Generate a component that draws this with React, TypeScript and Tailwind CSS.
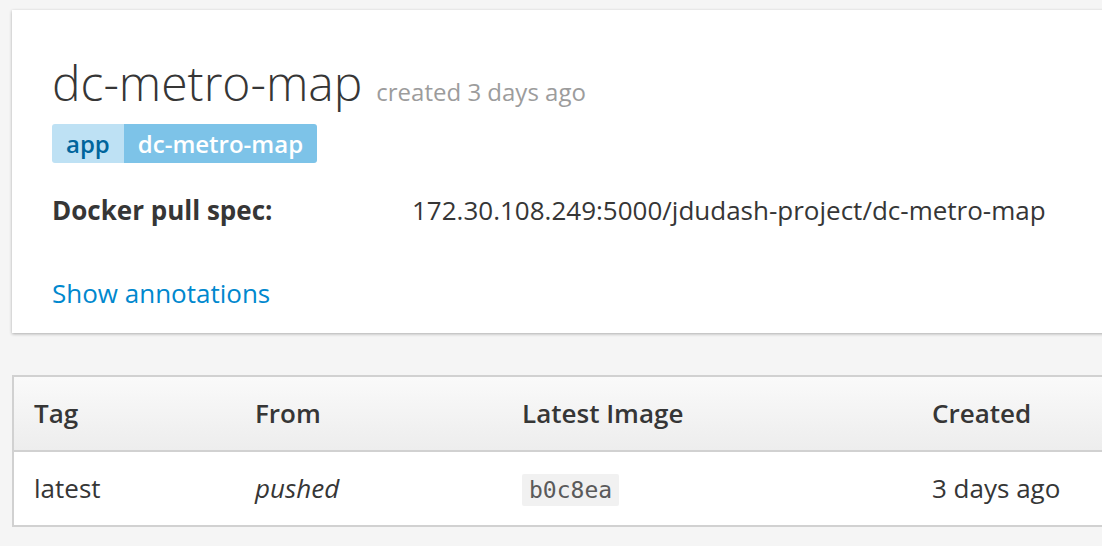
export default function App() {
  return (
    <div className="min-h-screen w-[1102px] h-[546px] overflow-hidden bg-[#f5f5f5] font-['Open_Sans',sans-serif] text-[#363636]">
      <div className="ml-[12px] mt-[10px] w-[1200px] bg-white px-[40px] pt-[45px] pb-[22px] shadow-[0_1px_3px_rgba(0,0,0,0.3)]">
        <div className="flex items-baseline gap-[14px]">
          <h1 className="text-[48px] font-light leading-[56px] text-[#363636]">dc-metro-map</h1>
          <span className="text-[24px] text-[#9c9c9c]">created 3 days ago</span>
        </div>
        <div className="mt-[13px] inline-flex overflow-hidden rounded-[3px] text-[24px] font-semibold leading-[39px]">
          <span className="bg-[#bee1f4] px-[14px] text-[#00659c]">app</span>
          <span className="bg-[#7dc3e8] px-[14px] text-white">dc-metro-map</span>
        </div>
        <div className="mt-[29px] flex text-[26px] leading-[36px]">
          <span className="w-[360px] font-bold text-[#363636]">Docker pull spec:</span>
          <span>172.30.108.249:5000/jdudash-project/dc-metro-map</span>
        </div>
        <div className="mt-[47px] text-[26px] leading-[36px] text-[#0088ce]">Show annotations</div>
      </div>

      <div className="ml-[12px] mt-[42px] w-[1200px] border-2 border-[#d1d1d1] bg-white text-[26px]">
        <div className="grid h-[75px] grid-cols-[221px_267px_410px_1fr] items-center border-b-2 border-[#d1d1d1] bg-gradient-to-b from-[#fafafa] to-[#ededed] font-semibold">
          <div className="pl-[20px]">Tag</div>
          <div className="pl-[20px]">From</div>
          <div className="pl-[20px]">Latest Image</div>
          <div className="pl-[20px]">Created</div>
        </div>
        <div className="grid h-[73px] grid-cols-[221px_267px_410px_1fr] items-center">
          <div className="pl-[20px]">latest</div>
          <div className="pl-[20px] italic">pushed</div>
          <div className="pl-[20px]">
            <code className="rounded-[2px] bg-[#f1f1f1] px-[7px] py-[3px] font-['DejaVu_Sans_Mono',monospace] text-[23px] text-[#5a5a5a]">b0c8ea</code>
          </div>
          <div className="pl-[20px]">3 days ago</div>
        </div>
      </div>
    </div>
  );
}
